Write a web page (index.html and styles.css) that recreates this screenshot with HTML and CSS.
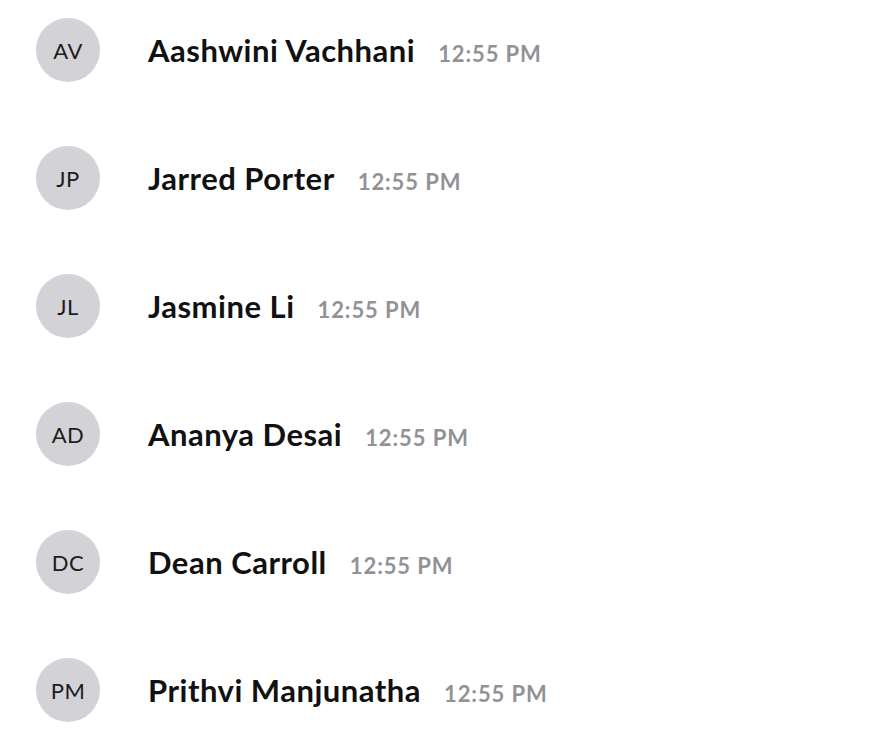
FILE: index.html
```html
<!DOCTYPE html>
<html>
<head>
<meta charset="utf-8">
<link rel="stylesheet" href="styles.css">
</head>
<body>
<ul class="list">
  <li class="row"><div class="avatar">AV</div><div class="meta"><span class="name">Aashwini Vachhani</span><span class="time">12:55 PM</span></div></li>
  <li class="row"><div class="avatar">JP</div><div class="meta"><span class="name">Jarred Porter</span><span class="time">12:55 PM</span></div></li>
  <li class="row"><div class="avatar">JL</div><div class="meta"><span class="name">Jasmine Li</span><span class="time">12:55 PM</span></div></li>
  <li class="row"><div class="avatar">AD</div><div class="meta"><span class="name">Ananya Desai</span><span class="time">12:55 PM</span></div></li>
  <li class="row"><div class="avatar">DC</div><div class="meta"><span class="name">Dean Carroll</span><span class="time">12:55 PM</span></div></li>
  <li class="row"><div class="avatar">PM</div><div class="meta"><span class="name">Prithvi Manjunatha</span><span class="time">12:55 PM</span></div></li>
</ul>
</body>
</html>
```
FILE: styles.css
```css
html, body {
  margin: 0;
  padding: 0;
  background: #ffffff;
  font-family: Lato, "Noto Sans", sans-serif;
  color: #111111;
}
.list {
  list-style: none;
  margin: 0;
  padding: 18px 0 0 36px;
  display: flex;
  flex-direction: column;
  gap: 64px;
}
.row {
  display: flex;
  align-items: center;
  gap: 48px;
  height: 64px;
}
.avatar {
  width: 64px;
  height: 64px;
  border-radius: 50%;
  background: #d3d3d7;
  display: flex;
  align-items: center;
  justify-content: center;
  font-size: 22px;
  letter-spacing: 0.5px;
  color: #1d1c1d;
  flex-shrink: 0;
}
.meta {
  display: flex;
  align-items: baseline;
  gap: 23px;
}
.name {
  font-weight: 700;
  font-size: 31px;
  letter-spacing: 0.5px;
  color: #111111;
}
.time {
  font-weight: 700;
  font-size: 22px;
  letter-spacing: 0.9px;
  color: #929296;
}
```
